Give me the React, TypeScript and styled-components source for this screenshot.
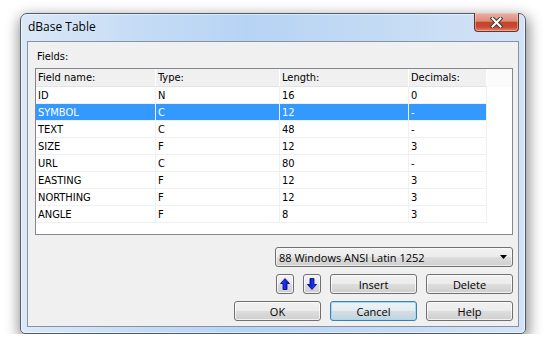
import React from 'react';
import styled, { createGlobalStyle } from 'styled-components';

const GlobalStyle = createGlobalStyle`
  html, body {
    margin: 0;
    padding: 0;
    background: #ffffff;
  }
  body {
    font-family: "DejaVu Sans", sans-serif;
  }
`;

const Page = styled.div`
  padding: 13px 0 0 20px;
`;

const Window = styled.div`
  width: 506px;
  height: 321px;
  box-sizing: border-box;
  display: flex;
  flex-direction: column;
  padding: 0 6px 6px;
  border: 1px solid #4e5b6a;
  border-radius: 7px 7px 5px 5px;
  background: linear-gradient(90deg, #dbe8f7 0%, #c4dbf5 25%, #b7d3f4 45%, #c3daf4 70%, #d3e3f6 100%);
  box-shadow: inset 0 0 0 1px rgba(255, 255, 255, 0.55), 1px 5px 14px 2px rgba(0, 0, 0, 0.45);
`;

const TitleBar = styled.div`
  height: 27px;
  display: flex;
  justify-content: space-between;
  align-items: flex-start;
`;

const TitleText = styled.span`
  padding: 5px 0 0 1px;
  font-family: "Segoe UI", "Open Sans", sans-serif;
  font-size: 12px;
  line-height: 16px;
  color: #000;
`;

const CloseButton = styled.div`
  width: 45px;
  height: 19px;
  margin-top: -1px;
  box-sizing: border-box;
  display: flex;
  align-items: center;
  justify-content: center;
  border: 1px solid #6a3328;
  border-top: none;
  border-radius: 0 0 4px 4px;
  background: linear-gradient(180deg, #eab0a4 0%, #de8d7c 45%, #c7432b 52%, #c64a33 78%, #e2866b 100%);
  box-shadow: inset 0 0 0 1px rgba(255, 210, 200, 0.45);
`;

const Client = styled.div`
  flex: 1;
  display: flex;
  flex-direction: column;
  padding: 8px 5px 0 7px;
  background: #f0f0f0;
  border: 1px solid #8494a6;
  font-family: "DejaVu Sans Condensed", "DejaVu Sans", sans-serif;
  font-stretch: condensed;
  font-size: 11px;
  color: #000;
`;

const Label = styled.div`
  height: 13px;
  line-height: 13px;
  padding-left: 2px;
`;

const TableBox = styled.div`
  height: 167px;
  margin-top: 5px;
  box-sizing: border-box;
  border: 1px solid #828790;
  background: #ffffff;
  display: grid;
  grid-template-columns: 120px 124px 129px 78px 1fr;
  grid-template-rows: 18px;
  grid-auto-rows: 17px;
  align-content: start;
`;

const Cell = styled.div<{ $header?: boolean; $selected?: boolean; $filler?: boolean }>`
  box-sizing: border-box;
  padding-left: 2px;
  display: flex;
  align-items: center;
  white-space: nowrap;
  overflow: hidden;
  border-right: ${(p) => (p.$filler ? 'none' : '1px solid #f0f0f0')};
  border-bottom: ${(p) => (p.$filler ? 'none' : p.$header ? '1px solid #e3e3e3' : '1px solid #f0f0f0')};
  background: ${(p) => (p.$filler ? (p.$header ? '#fbfbfb' : '#ffffff') : p.$header ? '#f0f0f0' : p.$selected ? '#3399ff' : '#ffffff')};
  border-right-color: ${(p) => (p.$header ? '#ffffff' : '#f0f0f0')};
  color: ${(p) => (p.$selected ? '#ffffff' : '#000000')};
`;

const Combo = styled.div`
  align-self: flex-end;
  width: 238px;
  height: 20px;
  margin-top: 12px;
  box-sizing: border-box;
  display: flex;
  align-items: center;
  justify-content: space-between;
  padding: 0 5px 0 3px;
  border: 1px solid #707070;
  border-radius: 3px;
  background: linear-gradient(180deg, #f2f2f2 0%, #ebebeb 50%, #dddddd 51%, #cfcfcf 100%);
  box-shadow: inset 0 0 0 1px rgba(255, 255, 255, 0.6);
  font-family: "Segoe UI", "Open Sans", sans-serif;
  font-stretch: normal;
  font-size: 11px;
  color: #000;
`;

const ButtonRow = styled.div`
  display: flex;
  justify-content: flex-end;
  gap: 9px;
  margin-top: 7px;
`;

const Button = styled.div<{ $default?: boolean; $small?: boolean }>`
  width: ${(p) => (p.$small ? '18px' : '87px')};
  height: 20px;
  box-sizing: border-box;
  display: flex;
  align-items: center;
  justify-content: center;
  border: 1px solid ${(p) => (p.$default ? '#3c7fb1' : '#707070')};
  border-radius: 3px;
  background: ${(p) =>
    p.$default
      ? 'linear-gradient(180deg, #eef3f6 0%, #e4ecf0 50%, #d3dee4 51%, #c6d3da 100%)'
      : 'linear-gradient(180deg, #f2f2f2 0%, #ebebeb 50%, #dddddd 51%, #cfcfcf 100%)'};
  box-shadow: inset 0 0 0 1px ${(p) => (p.$default ? '#9fdcf7' : 'rgba(255, 255, 255, 0.7)')};
  font-family: "Segoe UI", "Open Sans", sans-serif;
  font-stretch: normal;
  font-size: 11px;
  color: #000;
`;

const columns = ['Field name:', 'Type:', 'Length:', 'Decimals:'];

const fields = [
  ['ID', 'N', '16', '0'],
  ['SYMBOL', 'C', '12', '-'],
  ['TEXT', 'C', '48', '-'],
  ['SIZE', 'F', '12', '3'],
  ['URL', 'C', '80', '-'],
  ['EASTING', 'F', '12', '3'],
  ['NORTHING', 'F', '12', '3'],
  ['ANGLE', 'F', '8', '3'],
];

const selectedRow = 1;

const CloseIcon = () => (
  <svg width="13" height="11" viewBox="0 0 13 11">
    <path d="M2.5 1.5 L10.5 9.5 M10.5 1.5 L2.5 9.5" stroke="#3a3a3a" strokeWidth="4" strokeLinecap="square" />
    <path d="M2.5 1.5 L10.5 9.5 M10.5 1.5 L2.5 9.5" stroke="#ffffff" strokeWidth="2" strokeLinecap="square" />
  </svg>
);

const ArrowIcon = ({ down }: { down?: boolean }) => (
  <svg width="10" height="12" viewBox="0 0 10 12" style={down ? { transform: 'rotate(180deg)' } : undefined}>
    <defs>
      <linearGradient id={down ? 'ad' : 'au'} x1="0" y1="0" x2="1" y2="0">
        <stop offset="0" stopColor="#2a4dff" />
        <stop offset="1" stopColor="#0010c8" />
      </linearGradient>
    </defs>
    <path d="M5 0.5 L9.5 5.5 L7 5.5 L7 11.5 L3 11.5 L3 5.5 L0.5 5.5 Z" fill={`url(#${down ? 'ad' : 'au'})`} stroke="#00007a" strokeWidth="0.8" />
  </svg>
);

const ComboArrow = () => (
  <svg width="7" height="4" viewBox="0 0 7 4">
    <path d="M0 0 L7 0 L3.5 4 Z" fill="#000" />
  </svg>
);

export default function App() {
  return (
    <>
      <GlobalStyle />
      <Page>
        <Window>
          <TitleBar>
            <TitleText>dBase Table</TitleText>
            <CloseButton>
              <CloseIcon />
            </CloseButton>
          </TitleBar>
          <Client>
            <Label>Fields:</Label>
            <TableBox>
              {columns.map((c) => (
                <Cell key={c} $header>
                  {c}
                </Cell>
              ))}
              <Cell $header $filler />
              {fields.map((row, i) => (
                <React.Fragment key={row[0]}>
                  {row.map((v, j) => (
                    <Cell key={j} $selected={i === selectedRow}>
                      {v}
                    </Cell>
                  ))}
                  <Cell $filler />
                </React.Fragment>
              ))}
            </TableBox>
            <Combo>
              <span>88 Windows ANSI Latin 1252</span>
              <ComboArrow />
            </Combo>
            <ButtonRow>
              <Button $small>
                <ArrowIcon />
              </Button>
              <Button $small>
                <ArrowIcon down />
              </Button>
              <Button>Insert</Button>
              <Button>Delete</Button>
            </ButtonRow>
            <ButtonRow>
              <Button>OK</Button>
              <Button $default>Cancel</Button>
              <Button>Help</Button>
            </ButtonRow>
          </Client>
        </Window>
      </Page>
    </>
  );
}
